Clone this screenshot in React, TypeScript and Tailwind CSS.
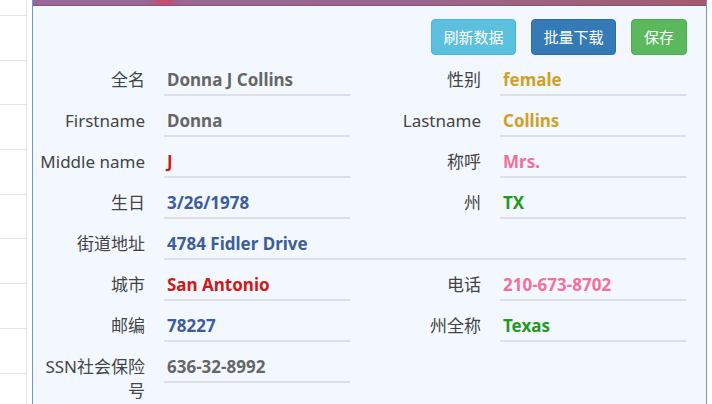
import React from "react";

type Field = { label: string; value: string; color: string };

const rows: (Field[] | Field)[] = [
  [
    { label: "全名", value: "Donna J Collins", color: "text-[#666666]" },
    { label: "性别", value: "female", color: "text-[#d1a126]" },
  ],
  [
    { label: "Firstname", value: "Donna", color: "text-[#666666]" },
    { label: "Lastname", value: "Collins", color: "text-[#d1a126]" },
  ],
  [
    { label: "Middle name", value: "J", color: "text-[#cc1a1a]" },
    { label: "称呼", value: "Mrs.", color: "text-[#f2709a]" },
  ],
  [
    { label: "生日", value: "3/26/1978", color: "text-[#3d5d9a]" },
    { label: "州", value: "TX", color: "text-[#1e9a1e]" },
  ],
  { label: "街道地址", value: "4784 Fidler Drive", color: "text-[#3d5d9a]" },
  [
    { label: "城市", value: "San Antonio", color: "text-[#cc1a1a]" },
    { label: "电话", value: "210-673-8702", color: "text-[#f2709a]" },
  ],
  [
    { label: "邮编", value: "78227", color: "text-[#3d5d9a]" },
    { label: "州全称", value: "Texas", color: "text-[#1e9a1e]" },
  ],
  [{ label: "SSN社会保险号", value: "636-32-8992", color: "text-[#666666]" }],
];

const Label = ({ text }: { text: string }) => (
  <div className="w-[112px] shrink-0 text-right text-[17px] leading-[24px] text-[#444] pt-[13px] break-all">
    {text}
  </div>
);

const Pair = ({ f }: { f: Field }) => (
  <div className="flex w-[336px] items-start">
    <Label text={f.label} />
    <div className="ml-[19px] w-[186px] border-b-2 border-[#dcdfe4] pt-[13px] pb-[2px] pl-[3px]">
      <span className={`text-[17px] leading-[24px] font-bold ${f.color}`}>{f.value}</span>
    </div>
  </div>
);

export default function App() {
  return (
    <div
      className="flex h-[404px] w-[712px] overflow-hidden bg-white"
      style={{ fontFamily: '"Noto Sans", "Noto Sans CJK SC", sans-serif' }}
    >
      {/* left list strip */}
      <div className="w-[27px] shrink-0 border-r border-[#e3e5e8] pt-[15px]">
        {Array.from({ length: 9 }).map((_, i) => (
          <div key={i} className="h-[44.7px] border-t border-[#e3e5e8]" />
        ))}
      </div>

      <div className="ml-[5px] w-[675px] shrink-0 border-x border-[#6d9bd1] bg-[#f3f8fe]">
        <div className="relative h-[6px] overflow-hidden border-b border-[#84537f] bg-gradient-to-r from-[#996699] via-[#9a6690] to-[#a45c6c]">
          <div className="absolute left-[120px] top-[-8px] h-[14px] w-[22px] rounded-full bg-[#c94a6a] blur-[3px]" />
        </div>

        <div className="flex justify-end gap-[15px] pr-[19px] pt-[13px]">
          <button className="h-[36px] w-[85px] rounded-[4px] border border-[#46b8da] bg-[#5bc0de] text-[15px] text-white">
            刷新数据
          </button>
          <button className="h-[36px] w-[85px] rounded-[4px] border border-[#2e6da4] bg-[#337ab7] text-[15px] text-white">
            批量下载
          </button>
          <button className="h-[36px] w-[56px] rounded-[4px] border border-[#4cae4c] bg-[#5cb85c] text-[15px] text-white">
            保存
          </button>
        </div>

        <div className="flex flex-col">
          {rows.map((r, i) =>
            Array.isArray(r) ? (
              <div key={i} className="flex">
                {r.map((f) => (
                  <Pair key={f.label} f={f} />
                ))}
              </div>
            ) : (
              <div key={i} className="flex items-start">
                <Label text={r.label} />
                <div className="ml-[19px] w-[522px] border-b-2 border-[#dcdfe4] pt-[13px] pb-[2px] pl-[3px]">
                  <span className={`text-[17px] leading-[24px] font-bold ${r.color}`}>{r.value}</span>
                </div>
              </div>
            )
          )}
        </div>
      </div>
    </div>
  );
}
